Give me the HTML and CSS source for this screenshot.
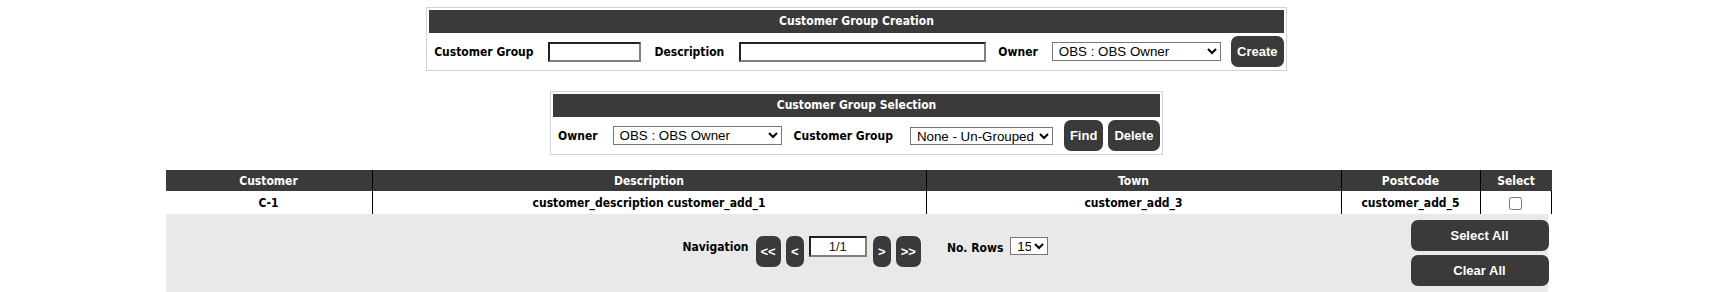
FILE: index.html
```html
<!DOCTYPE html>
<html>
<head>
<meta charset="utf-8">
<link rel="stylesheet" href="styles.css">
</head>
<body>
<div class="page">
  <div class="panel panel-create">
    <div class="panel-head">Customer Group Creation</div>
    <div class="panel-row">
      <span class="lbl">Customer Group</span>
      <input class="txt txt-group" type="text">
      <span class="lbl lbl-desc">Description</span>
      <input class="txt txt-desc" type="text">
      <span class="lbl lbl-owner">Owner</span>
      <select class="sel sel-owner"><option>OBS : OBS Owner</option></select>
      <button class="btn btn-create">Create</button>
    </div>
  </div>

  <div class="panel panel-select">
    <div class="panel-head">Customer Group Selection</div>
    <div class="panel-row">
      <span class="lbl">Owner</span>
      <select class="sel sel-owner2"><option>OBS : OBS Owner</option></select>
      <span class="lbl lbl-cg">Customer Group</span>
      <select class="sel sel-group"><option>None - Un-Grouped</option></select>
      <button class="btn btn-find">Find</button>
      <button class="btn btn-delete">Delete</button>
    </div>
  </div>

  <div class="results">
    <table class="grid">
      <thead>
        <tr>
          <th class="c-cust">Customer</th>
          <th class="c-desc">Description</th>
          <th class="c-town">Town</th>
          <th class="c-post">PostCode</th>
          <th class="c-sel">Select</th>
        </tr>
      </thead>
      <tbody>
        <tr>
          <td>C-1</td>
          <td>customer_description customer_add_1</td>
          <td>customer_add_3</td>
          <td>customer_add_5</td>
          <td class="c-sel"><input class="chk" type="checkbox"></td>
        </tr>
      </tbody>
    </table>
    <div class="footer">
      <div class="nav">
        <span class="lbl nav-lbl">Navigation</span>
        <button class="btn btn-nav">&lt;&lt;</button>
        <button class="btn btn-nav">&lt;</button>
        <input class="txt txt-page" type="text" value="1/1">
        <button class="btn btn-nav">&gt;</button>
        <button class="btn btn-nav">&gt;&gt;</button>
        <span class="lbl rows-lbl">No. Rows</span>
        <select class="sel sel-rows"><option>15</option></select>
      </div>
      <div class="bulk">
        <button class="btn btn-bulk">Select All</button>
        <button class="btn btn-bulk">Clear All</button>
      </div>
    </div>
  </div>
</div>
</body>
</html>
```

FILE: styles.css
```css
html, body {
  margin: 0;
  padding: 0;
  background: #fff;
}

.page {
  padding-top: 7px;
  display: flex;
  flex-direction: column;
  align-items: center;
  font-family: "DejaVu Sans", Tahoma, sans-serif;
  font-stretch: condensed;
  font-weight: bold;
  font-size: 12px;
  color: #000;
}

.panel {
  border: 1px solid #d3d3d3;
  padding: 2px;
  display: flex;
  flex-direction: column;
  gap: 2px;
}

.panel-select {
  margin-top: 20px;
}

.panel-head {
  background: #3a3a3a;
  color: #fff;
  height: 23px;
  line-height: 23px;
  text-align: center;
}

.panel-row {
  height: 33px;
  display: flex;
  align-items: center;
  padding-left: 5px;
}

.panel-select .panel-row {
  padding-left: 5px;
}

.lbl {
  white-space: nowrap;
}

.txt {
  box-sizing: border-box;
  height: 20px;
  border: 2px solid;
  border-color: #222 #808080 #808080 #222;
  background: #fff;
  padding: 0 3px;
  margin: 0;
  font-family: "Liberation Sans", Arial, sans-serif;
  font-weight: normal;
  font-stretch: normal;
  font-size: 13px;
  color: #222;
}

.txt-group { width: 93px; margin-left: 15px; }
.lbl-desc { margin-left: 13px; }
.txt-desc { width: 247px; margin-left: 15px; }
.lbl-owner { margin-left: 12px; }

.sel {
  box-sizing: border-box;
  height: 19px;
  border: 1px solid #767676;
  border-radius: 0;
  background: #fff;
  margin: 0;
  padding: 0 0 0 2px;
  font-family: "Liberation Sans", Arial, sans-serif;
  font-weight: normal;
  font-stretch: normal;
  font-size: 13.33px;
  color: #000;
}

.sel-owner { width: 169px; margin-left: 14px; }
.sel-owner2 { width: 169px; margin-left: 15px; }
.lbl-cg { margin-left: 12px; }
.sel-group { width: 143px; margin-left: 17px; height: 18px; }

.btn {
  box-sizing: border-box;
  height: 31px;
  border: none;
  border-radius: 7px;
  background: #3a3a3a;
  color: #fff;
  padding: 0 6px;
  margin: 0;
  font-family: "Liberation Sans", Arial, sans-serif;
  font-weight: bold;
  font-stretch: normal;
  font-size: 13px;
  cursor: pointer;
}

.btn-create { margin-left: 10px; width: 53px; }
.btn-find { margin-left: 11px; width: 39px; }
.btn-delete { margin-left: 5px; width: 52px; }

.results {
  margin-top: 15px;
  width: 1382px;
}

.grid {
  width: 100%;
  border-collapse: collapse;
  table-layout: fixed;
}

.grid th {
  background: #3a3a3a;
  color: #fff;
  height: 21px;
  padding: 0;
  font-weight: bold;
  text-align: center;
  border-left: 1px solid #000;
}

.grid td {
  height: 23px;
  padding: 0;
  text-align: center;
  border-left: 1px solid #000;
}

.grid th:first-child,
.grid td:first-child {
  border-left: none;
}

.grid td:last-child {
  border-right: 1px solid #000;
}

.c-cust { width: 206px; }
.c-desc { width: 553px; }
.c-town { width: 414px; }
.c-post { width: 138px; }
.c-sel { width: 71px; }

.chk {
  margin: 0;
  width: 13px;
  height: 13px;
  vertical-align: middle;
}

.footer {
  background: #e9e9e9;
  height: 78px;
  display: flex;
  align-items: flex-start;
}

.nav {
  display: flex;
  align-items: flex-start;
  margin-left: 517px;
  margin-top: 22px;
}

.nav-lbl {
  margin-top: 4px;
  margin-right: 7px;
}

.btn-nav {
  padding: 0 5px;
  margin-right: 5px;
  min-width: 18px;
}

.txt-page {
  width: 58px;
  height: 21px;
  text-align: center;
  margin-right: 6px;
}

.rows-lbl {
  margin-left: 21px;
  margin-top: 5px;
  margin-right: 7px;
}

.sel-rows {
  width: 38px;
  height: 18px;
  margin-top: 1px;
}

.bulk {
  margin-left: auto;
  margin-top: 6px;
  margin-right: -1px;
  display: flex;
  flex-direction: column;
  gap: 4px;
}

.btn-bulk {
  width: 138px;
}
```
